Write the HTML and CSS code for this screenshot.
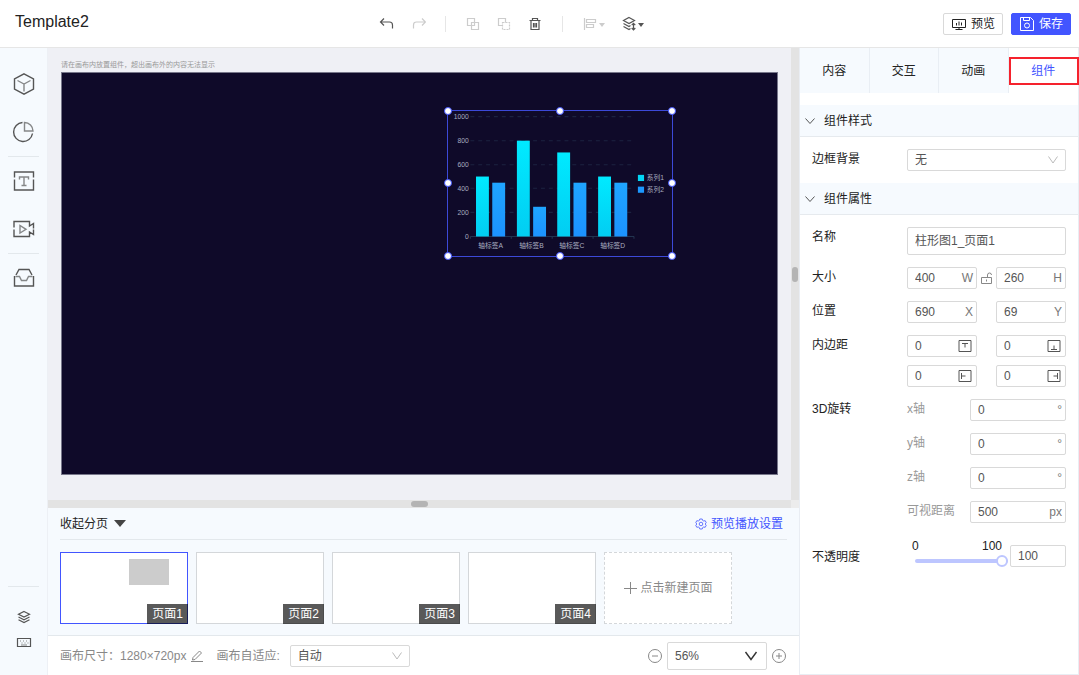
FILE: index.html
```html
<!DOCTYPE html>
<html lang="zh-CN">
<head>
  <meta charset="UTF-8">
  <meta name="viewport" content="width=device-width, initial-scale=1.0">
  <title>Template2</title>
  <link rel="stylesheet" href="styles.css">
</head>
<body>
  <header class="header">
    <h1>Template2</h1>
    <div class="toolbar">
      <button aria-label="撤销"><svg width="16" height="16" viewBox="0 0 16 16"><path d="M5 2.500 1.500 6 5 9.500M2 6h8.500q3 0 3 3v3.500"/></svg></button>
      <button aria-label="重做" disabled><svg width="16" height="16" viewBox="0 0 16 16"><path d="M12 2.500 15.500 6 12 9.500M15 6H6.500q-3 0-3 3v3.500"/></svg></button>
      <span class="toolbar-line"></span>
      <button aria-label="组合" disabled><svg width="16" height="16" viewBox="0 0 16 16"><path d="M2.500 2.500h7v7h-7zM6.500 6.500h7v7h-7z"/></svg></button>
      <button aria-label="取消组合" disabled><svg width="16" height="16" viewBox="0 0 16 16"><path d="M6.500 9.500h-4v-7h7v4"/><path stroke-dasharray="2 1" d="M6.500 6.500h7v7h-7z"/></svg></button>
      <button aria-label="删除"><svg width="16" height="16" viewBox="0 0 16 16"><path d="M2.500 4.500h11M5.500 4V2.500h5V4M4 5v8.500h8V5M6.500 7v4.500M8 7v4.500M9.500 7v4.500"/></svg></button>
      <span class="toolbar-line"></span>
      <button aria-label="对齐" class="with-caret" disabled><svg width="16" height="16" viewBox="0 0 16 16"><path d="M2.500 2v12M4.500 3.500h9v3h-9zM4.500 8.500h7v3h-7z"/></svg><span class="caret"></span></button>
      <button aria-label="图层顺序" class="with-caret"><svg width="16" height="16" viewBox="0 0 16 16"><path d="M8 1.500 13.500 4.500 8 7.500 2.500 4.500zM2.500 7.500 8 10.500l1.500-1M2.500 10.500 8 13.500l1.500-1M12.500 7.500v6M10.700 9.200l1.800-1.800 1.800 1.800M10.700 12l1.800 1.800L14.300 12"/></svg><span class="caret"></span></button>
    </div>
    <div class="actions">
      <button class="btn"><svg width="16" height="16" viewBox="0 0 16 16"><path d="M1.500 3.500h13v8h-13zM8 11.500v2M4.500 13.500h7M5.500 7v2.500M8 5.500v4M10.500 6.500v3"/></svg>预览</button>
      <button class="btn btn-primary"><svg width="16" height="16" viewBox="0 0 16 16"><path d="M1.500 1.500h10l3 3v10h-13zM4.500 1.500v3h6v-3"/><circle cx="8" cy="9.500" r="2.500"/></svg>保存</button>
    </div>
  </header>

  <main class="main">
    <nav class="sidebar">
      <button aria-label="组件"><svg width="24" height="24" viewBox="0 0 24 24"><path d="M12 1.800 21.500 7v10L12 22.200 2.500 17V7z"/><path class="thin" d="m5.500 8.500 6.500 3.500 6.500-3.500M12 12v7.500"/></svg></button>
      <button aria-label="图表"><svg width="24" height="24" viewBox="0 0 24 24"><path d="M10.500 2.500A9.500 9.500 0 1 0 20.500 13.500"/><path class="thin" d="M12.500 2.500V11h8.500a8.500 8.500 0 0 0-8.500-8.500z"/></svg></button>
      <span class="sidebar-line"></span>
      <button aria-label="文本"><svg width="24" height="24" viewBox="0 0 24 24"><path d="M2.500 8.500V3h19v5.500M2.500 10.500V21h19V10.500"/><path class="thin" d="M7.500 10.500V8h9v2.500M12 8v8.500M9.500 16.500h5"/></svg></button>
      <button aria-label="媒体"><svg width="24" height="24" viewBox="0 0 24 24"><path d="M2 10.500v-6h15.500v4.500l4-2.500v5M2 12.500v7h15.500V15l4 2.500v-5"/><path class="thin" d="M8 8.500v7.500l6-3.700z"/></svg></button>
      <span class="sidebar-line"></span>
      <button aria-label="素材"><svg width="24" height="24" viewBox="0 0 24 24"><path d="M4 9l3-5.500h10L20 9M2.500 10v10h19V10"/><path class="thin" d="M3.500 10.500h4l2 4h5l2-4h4"/></svg></button>
      <div class="sidebar-bottom">
        <button aria-label="图层"><svg width="16" height="16" viewBox="0 0 16 16"><path d="M8 2.500 13.500 5.200 8 8 2.500 5.200zM2.500 8 8 10.800 13.500 8M2.500 10.800 8 13.600l5.500-2.800"/></svg></button>
        <button aria-label="快捷键"><svg width="16" height="16" viewBox="0 0 16 16"><path d="M1.500 3.500h13v8h-13z"/><path class="thin" d="M4 6h1M7 6h1M10 6h1M5.500 8h1M8.500 8h1M11.500 8h1M5 10h6"/></svg></button>
      </div>
    </nav>

    <section class="center">
      <div class="stage">
        <div class="workspace">
          <p class="hint">请在画布内放置组件，超出画布外的内容无法显示</p>
          <div class="canvas">
            <div class="widget">
              <svg class="chart" viewBox="0 0 400 260" role="img" aria-label="柱形图1">
                <defs>
                  <linearGradient id="cyan" x1="0" y1="0" x2="0" y2="1"><stop offset="0" stop-color="#00eaff"/><stop offset="1" stop-color="#02cdf2"/></linearGradient>
                  <linearGradient id="blue" x1="0" y1="0" x2="0" y2="1"><stop offset="0" stop-color="#1fa5ff"/><stop offset="1" stop-color="#1c92ff"/></linearGradient>
                </defs>
                <path class="grid-lines" d="M40 10H332M40 53H332M40 96H332M40 138H332M40 181H332"/>
                <path class="axis" d="M40 224H332M40 224v4M113 224v4M186 224v4M259 224v4M332 224v4"/>
                <g fill="url(#cyan)">
                  <rect x="50" y="117" width="23" height="107"/>
                  <rect x="123" y="53" width="23" height="171"/>
                  <rect x="195" y="74" width="23" height="150"/>
                  <rect x="268" y="117" width="23" height="107"/>
                </g>
                <g fill="url(#blue)">
                  <rect x="79" y="128" width="23" height="96"/>
                  <rect x="152" y="171" width="23" height="53"/>
                  <rect x="224" y="128" width="23" height="96"/>
                  <rect x="297" y="128" width="23" height="96"/>
                </g>
                <g text-anchor="end">
                  <text x="37" y="14">1000</text>
                  <text x="37" y="57">800</text>
                  <text x="37" y="100">600</text>
                  <text x="37" y="142">400</text>
                  <text x="37" y="185">200</text>
                  <text x="37" y="228">0</text>
                </g>
                <g text-anchor="middle">
                  <text x="76" y="244">轴标签A</text>
                  <text x="149" y="244">轴标签B</text>
                  <text x="221" y="244">轴标签C</text>
                  <text x="294" y="244">轴标签D</text>
                </g>
                <rect x="339" y="114" width="11" height="11" fill="#02d6f5"/>
                <rect x="339" y="135" width="11" height="11" fill="#1c98ff"/>
                <text x="355" y="124">系列1</text>
                <text x="355" y="145">系列2</text>
              </svg>
              <span class="handle top left"></span>
              <span class="handle top"></span>
              <span class="handle top right"></span>
              <span class="handle left"></span>
              <span class="handle right"></span>
              <span class="handle bottom left"></span>
              <span class="handle bottom"></span>
              <span class="handle bottom right"></span>
            </div>
          </div>
        </div>
        <div class="scrollbar vertical"><span class="scroll-thumb"></span></div>
        <div class="scrollbar horizontal"><span class="scroll-thumb"></span></div>
        <div class="scroll-corner"></div>
      </div>

      <div class="pages">
        <div class="pages-head">
          <button class="fold">收起分页<span class="fold-caret"></span></button>
          <a class="play-setting" href="#"><svg width="12" height="12" viewBox="0 0 12 12"><path d="M4.800 1h2.400l.5 1.500 1 .5 1.500-.3 1 1.900-1 1.400 1 1.400-1 1.900-1.500-.3-1 .5-.5 1.500H4.800l-.5-1.500-1-.5-1.500.3-1-1.900 1-1.400-1-1.400 1-1.900 1.500.3 1-.5z"/><circle cx="6" cy="6" r="1.800"/></svg>预览播放设置</a>
        </div>
        <div class="page-list">
          <button class="page active"><span class="page-block"></span><span class="page-name">页面1</span></button>
          <button class="page"><span class="page-name">页面2</span></button>
          <button class="page"><span class="page-name">页面3</span></button>
          <button class="page"><span class="page-name">页面4</span></button>
          <button class="page page-add"><svg width="14" height="14" viewBox="0 0 14 14"><path d="M7.500 1v12M1 7.500h13"/></svg>点击新建页面</button>
        </div>
      </div>

      <footer class="status">
        <span>画布尺寸：1280×720px</span>
        <button class="icon-btn edit" aria-label="编辑尺寸"><svg width="14" height="14" viewBox="0 0 14 14"><path d="M3 8.500 9.500 2l2 2L5 10.500l-2.500.5zM1 12.500h12"/></svg></button>
        <label for="fit">画布自适应:</label>
        <span class="select fit">
          <select id="fit"><option>自动</option></select>
          <svg width="12" height="12" viewBox="0 0 12 12"><path d="M1.500 2.500 6 9l4.500-6.500"/></svg>
        </span>
        <div class="zoom">
          <button class="icon-btn" aria-label="缩小"><svg width="16" height="16" viewBox="0 0 16 16"><circle cx="8" cy="8" r="6.500"/><path d="M5 8h6"/></svg></button>
          <span class="select zoom-select">
            <select aria-label="缩放比例"><option>56%</option></select>
            <svg width="14" height="14" viewBox="0 0 14 14"><path d="M1.500 3 7 10.500 12.500 3"/></svg>
          </span>
          <button class="icon-btn" aria-label="放大"><svg width="16" height="16" viewBox="0 0 16 16"><circle cx="8" cy="8" r="6.500"/><path d="M5 8h6M8 5v6"/></svg></button>
        </div>
      </footer>
    </section>

    <aside class="panel">
      <div class="tabs">
        <button>内容</button>
        <button>交互</button>
        <button>动画</button>
        <button class="active">组件</button>
      </div>

      <h2><svg width="10" height="10" viewBox="0 0 10 10"><path d="M.500 2.500 5 7.500l4.500-5"/></svg>组件样式</h2>
      <div class="form">
        <div class="row">
          <label for="border">边框背景</label>
          <span class="select">
            <select id="border"><option>无</option></select>
            <svg width="12" height="12" viewBox="0 0 12 12"><path d="M1.500 2.500 6 9l4.500-6.500"/></svg>
          </span>
        </div>
      </div>

      <h2><svg width="10" height="10" viewBox="0 0 10 10"><path d="M.500 2.500 5 7.500l4.500-5"/></svg>组件属性</h2>
      <div class="form">
        <div class="row">
          <label for="name">名称</label>
          <span class="field tall"><input id="name" type="text" value="柱形图1_页面1"></span>
        </div>
        <div class="row">
          <label for="width">大小</label>
          <div class="pair">
            <span class="field"><input id="width" type="text" value="400"><span>W</span></span>
            <button class="icon-btn lock" aria-label="锁定比例"><svg width="14" height="14" viewBox="0 0 14 14"><path d="M1.500 6.500h10v6h-10zM7.500 6V4q0-2 2-2t2 2M6.500 8.500v2"/></svg></button>
            <span class="field"><input aria-label="高" type="text" value="260"><span>H</span></span>
          </div>
        </div>
        <div class="row">
          <label for="posX">位置</label>
          <div class="pair">
            <span class="field"><input id="posX" type="text" value="690"><span>X</span></span>
            <span></span>
            <span class="field"><input aria-label="Y" type="text" value="69"><span>Y</span></span>
          </div>
        </div>
        <div class="row">
          <label for="padTop">内边距</label>
          <div class="pair">
            <span class="field side"><input id="padTop" type="text" value="0"><svg width="14" height="14" viewBox="0 0 14 14"><path d="M1 1.500h12v11H1zM4 4.500h6M7 4.500v4"/></svg></span>
            <span></span>
            <span class="field side"><input aria-label="下边距" type="text" value="0"><svg width="14" height="14" viewBox="0 0 14 14"><path d="M1 1.500h12v11H1zM4 10.500h6M7 10.500v-4"/></svg></span>
            <span class="field side"><input aria-label="左边距" type="text" value="0"><svg width="14" height="14" viewBox="0 0 14 14"><path d="M1 1.500h12v11H1zM3.500 4v6M3.500 7h4"/></svg></span>
            <span></span>
            <span class="field side"><input aria-label="右边距" type="text" value="0"><svg width="14" height="14" viewBox="0 0 14 14"><path d="M1 1.500h12v11H1zM10.500 4v6M10.500 7h-4"/></svg></span>
          </div>
        </div>
        <div class="row">
          <span class="row-title">3D旋转</span>
          <div class="rotate">
            <label for="rx">x轴</label>
            <span class="field"><input id="rx" type="text" value="0"><span>°</span></span>
            <label for="ry">y轴</label>
            <span class="field"><input id="ry" type="text" value="0"><span>°</span></span>
            <label for="rz">z轴</label>
            <span class="field"><input id="rz" type="text" value="0"><span>°</span></span>
            <label for="distance">可视距离</label>
            <span class="field"><input id="distance" type="text" value="500"><span>px</span></span>
          </div>
        </div>
        <div class="row opacity">
          <label for="opacity">不透明度</label>
          <div class="slider">
            <div class="scale"><span>0</span><span>100</span></div>
            <input id="opacity" type="range" min="0" max="100" value="100">
          </div>
          <span class="field"><input aria-label="不透明度数值" type="text" value="100"></span>
        </div>
      </div>
    </aside>
  </main>
</body>
</html>
```
FILE: styles.css
```css
* {
  margin: 0;
  padding: 0;
  box-sizing: border-box;
}

body {
  display: flex;
  flex-direction: column;
  min-height: 100vh;
  font-family: "Liberation Sans", "Noto Sans CJK SC", sans-serif;
  font-size: 12px;
  line-height: 20px;
  color: #222;
  background-color: #fff;
}

button, input, select {
  font: inherit;
  color: inherit;
  border: none;
  border-radius: 0;
  background: none;
  outline: none;
}

button {
  cursor: pointer;
}

svg {
  flex: none;
  fill: none;
  stroke: currentColor;
}

/* 顶部 */
.header {
  display: grid;
  grid-template-columns: 34% auto 1fr;
  align-items: center;
  height: 48px;
  padding: 0 8px 0 15px;
  border-bottom: 1px solid #e6e6e6;
}

.header h1 {
  font-size: 16px;
  font-weight: normal;
  padding-bottom: 3px;
}

.toolbar {
  display: flex;
  align-items: center;
  gap: 15px;
  padding-left: 5px;
  color: #555;
}

.toolbar button {
  display: flex;
  align-items: center;
  width: 16px;
  height: 16px;
}

.toolbar svg {
  stroke-width: 1.2;
}

.toolbar .with-caret {
  width: 24px;
}

.toolbar button:disabled {
  color: #ccc;
}

.toolbar-line {
  width: 1px;
  height: 16px;
  margin: 0 4px;
  background-color: #e6e6e6;
}

.caret {
  flex: none;
  border: 3px solid transparent;
  border-top: 4px solid currentColor;
  border-bottom: none;
  margin: 2px 0 0 1px;
}

.actions {
  display: flex;
  justify-content: flex-end;
  gap: 8px;
}

.btn {
  display: flex;
  align-items: center;
  justify-content: center;
  gap: 4px;
  width: 60px;
  height: 22px;
  border: 1px solid #d9d9d9;
  border-radius: 2px;
}

.btn-primary {
  color: #fff;
  border-color: #4255ff;
  background-color: #4255ff;
}

/* 主体 */
.main {
  flex: 1;
  display: flex;
}

.sidebar {
  display: flex;
  flex-direction: column;
  align-items: center;
  width: 48px;
  padding: 12px 0 19px;
  color: #555;
  background-color: #f6fafe;
  border-right: 1px solid #edf0f5;
}

.sidebar button {
  display: flex;
  align-items: center;
  justify-content: center;
  width: 100%;
  height: 48px;
}

.sidebar svg {
  stroke-width: 1.4;
}

.thin {
  opacity: 0.7;
}

.sidebar-line {
  width: 31px;
  height: 1px;
  background-color: #e3e8ec;
}

.sidebar-bottom {
  width: 31px;
  margin-top: auto;
  padding-top: 17px;
  border-top: 1px solid #e3e8ec;
}

.sidebar-bottom button {
  height: 26px;
}

.sidebar-bottom svg {
  stroke-width: 1.2;
}

.center {
  flex: 1;
  display: flex;
  flex-direction: column;
  min-width: 0;
}

.stage {
  flex: 1;
  display: grid;
  grid-template-columns: 1fr 8px;
  grid-template-rows: 1fr 8px;
  background-color: #eff0f5;
}

.workspace {
  padding: 11px 13px 24px;
}

.hint {
  height: 13px;
  font-size: 7px;
  line-height: 12px;
  color: #999;
}

.canvas {
  position: relative;
  aspect-ratio: 16 / 9;
  background-color: #0f0a29;
  box-shadow: inset 0 0 0 1px #77778a;
}

/* 位置与尺寸按 1280×720 的画布换算 */
.widget {
  position: absolute;
  left: calc(690 / 1280 * 100%);
  top: calc(69 / 720 * 100%);
  width: calc(400 / 1280 * 100%);
  aspect-ratio: 400 / 260;
  outline: 1px solid #3c49d8;
}

.chart {
  display: block;
  width: 100%;
  stroke: none;
}

.chart text {
  font-size: 12px;
  fill: #a9adc0;
}

.grid-lines {
  stroke: #1c2340;
  stroke-width: 2;
  stroke-dasharray: 7 7;
}

.axis {
  stroke: #22344f;
  stroke-width: 2;
}

.handle {
  position: absolute;
  left: 50%;
  top: 50%;
  width: 8px;
  height: 8px;
  margin: -4px;
  border: 1px solid #4255ff;
  border-radius: 50%;
  background-color: #fff;
}

.handle.left { left: 0; }
.handle.right { left: 100%; }
.handle.top { top: 0; }
.handle.bottom { top: 100%; }

.scrollbar {
  display: flex;
  align-items: center;
  justify-content: center;
  background-color: #e3e3e3;
}

.scroll-thumb {
  border-radius: 3px;
  background-color: #b4b4b4;
}

.vertical .scroll-thumb {
  width: 6px;
  height: 15px;
}

.horizontal .scroll-thumb {
  width: 17px;
  height: 6px;
}

.scroll-corner {
  background-color: #ececec;
}

/* 分页 */
.pages {
  padding: 0 12px 11px;
  background-color: #f6fafe;
  border-bottom: 1px solid #e3e8ec;
}

.pages-head {
  display: flex;
  align-items: center;
  justify-content: space-between;
  height: 32px;
  padding-right: 4px;
  border-bottom: 1px solid #e3e8ec;
}

.fold {
  display: flex;
  align-items: center;
  gap: 6px;
}

.fold-caret {
  border: 6px solid transparent;
  border-top: 7px solid #444;
  border-bottom: none;
}

.play-setting {
  display: flex;
  align-items: center;
  gap: 4px;
  color: #4255ff;
  text-decoration: none;
}

.play-setting svg {
  stroke-width: 0.8;
}

.page-list {
  display: flex;
  gap: 8px;
  padding-top: 12px;
}

.page {
  position: relative;
  width: 128px;
  height: 72px;
  border: 1px solid #d4d7da;
  background-color: #fff;
}

.page.active {
  border-color: #4255ff;
}

.page-block {
  position: absolute;
  left: 54%;
  top: 9%;
  width: 40px;
  height: 26px;
  background-color: #ccc;
}

.page-name {
  position: absolute;
  right: -1px;
  bottom: -1px;
  padding: 0 5px;
  color: #fff;
  background-color: rgba(0, 0, 0, 0.65);
}

.page-add {
  display: flex;
  align-items: center;
  justify-content: center;
  gap: 3px;
  color: #888;
  border-style: dashed;
}

/* 底部状态栏 */
.status {
  display: flex;
  align-items: center;
  height: 39px;
  padding: 0 12px;
  color: #888;
}

.icon-btn {
  display: flex;
  color: #888;
}

.edit {
  margin: 0 12px 0 4px;
}

.select {
  display: flex;
  align-items: center;
  height: 22px;
  padding-right: 6px;
  color: #bbb;
  border: 1px solid #d9d9d9;
  border-radius: 2px;
  background-color: #fff;
}

.select select {
  appearance: none;
  flex: 1;
  min-width: 0;
  height: 20px;
  padding-left: 7px;
  color: #555;
}

.fit {
  width: 120px;
  margin-left: 10px;
}

.zoom {
  display: flex;
  align-items: center;
  gap: 4px;
  margin-left: auto;
}

.zoom-select {
  width: 100px;
  height: 28px;
  padding-right: 8px;
  color: #333;
}

.zoom-select svg {
  stroke-width: 1.4;
}

/* 右侧面板 */
.panel {
  width: 280px;
  border: 1px solid #e9edf3;
  border-top: none;
}

.tabs {
  display: grid;
  grid-template-columns: repeat(4, 1fr);
  height: 45px;
  margin-bottom: 12px;
}

.tabs button {
  position: relative;
  border-right: 1px solid #e9eef4;
  background-color: #f6fafe;
}

.tabs .active {
  color: #4255ff;
  border-right: none;
  background-color: #fff;
}

.tabs .active::after {
  content: "";
  position: absolute;
  inset: 9px -1px 8px 0;
  border: 2px solid #f5222d;
}

.panel h2 {
  display: flex;
  align-items: center;
  gap: 9px;
  height: 32px;
  padding-left: 5px;
  font-size: 12px;
  font-weight: normal;
  background-color: #f6fafe;
  border-bottom: 1px solid #e6eaee;
}

.panel h2 svg {
  color: #555;
}

.form {
  display: flex;
  flex-direction: column;
  gap: 12px;
  padding: 12px;
}

.row {
  display: grid;
  grid-template-columns: 95px 1fr;
}

.field {
  display: flex;
  align-items: center;
  height: 22px;
  padding-right: 3px;
  color: #777;
  border: 1px solid #d9d9d9;
  border-radius: 2px;
}

.field input {
  flex: 1;
  width: 0;
  min-width: 0;
  padding-left: 7px;
  color: #555;
}

.tall {
  height: 28px;
}

.side svg {
  margin-right: 1px;
  color: #555;
}

.pair {
  display: grid;
  grid-template-columns: 1fr 19px 1fr;
  gap: 8px 0;
}

.lock {
  align-items: center;
  justify-content: center;
}

.rotate {
  display: grid;
  grid-template-columns: 63px 1fr;
  gap: 12px 0;
}

.rotate label {
  color: #999;
}

.opacity {
  grid-template-columns: 95px 1fr 56px;
  align-items: end;
  padding-top: 2px;
}

.slider {
  padding: 0 2px 0 5px;
}

.scale {
  display: flex;
  justify-content: space-between;
  line-height: 18px;
  padding-right: 6px;
}

.slider input {
  appearance: none;
  display: block;
  width: calc(100% - 3px);
  height: 12px;
  margin-left: 3px;
}

.slider input::-webkit-slider-runnable-track {
  height: 4px;
  border-radius: 2px;
  background-color: #bdc6ff;
}

.slider input::-webkit-slider-thumb {
  appearance: none;
  width: 12px;
  height: 12px;
  margin-top: -4px;
  border: 2px solid #bdc6ff;
  border-radius: 50%;
  background-color: #fff;
}
```
